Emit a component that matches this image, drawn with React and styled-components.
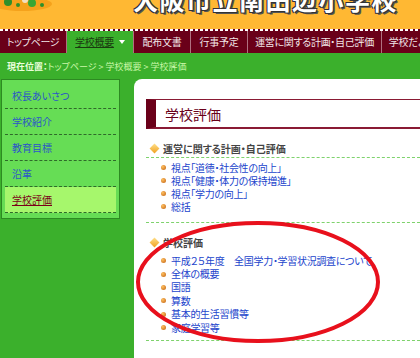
import styled, { createGlobalStyle } from "styled-components";

const Global = createGlobalStyle`
  body {
    margin: 0;
    background: #3bb02c;
    font-family: "Noto Sans CJK JP", "Noto Sans", sans-serif;
    font-feature-settings: "palt";
  }
`;

const Page = styled.div`
  position: relative;
  width: 420px;
  height: 358px;
  overflow: hidden;
  background: #3bb02c;
`;

const Header = styled.div`
  height: 30px;
  background: #ffb833;
  overflow: hidden;
  display: flex;
  align-items: flex-start;
`;

const Logo = styled.svg`
  flex: none;
  width: 133px;
  height: 30px;
`;

const Title = styled.div`
  margin-top: -14px;
  font-size: 25px;
  line-height: 26px;
  font-weight: bold;
  letter-spacing: 1.5px;
  color: #fff;
  white-space: nowrap;
  font-feature-settings: normal;
  text-shadow: 1px 1px 0 #333, -1px -1px 0 #333, 1px -1px 0 #333, -1px 1px 0 #333,
    2px 2px 0 #555;
`;

const Nav = styled.div`
  height: 23px;
  display: flex;
  background: #6a0019;
  position: relative;
  &::before {
    content: "";
    position: absolute;
    left: 0;
    right: 0;
    top: -1px;
    height: 2px;
    background: repeating-linear-gradient(90deg, #fff 0 3px, #6a0019 3px 5px);
  }
`;

const NavItem = styled.div`
  flex: none;
  width: ${(p) => p.w}px;
  box-sizing: border-box;
  border-right: 1px solid #b07080;
  display: flex;
  align-items: center;
  justify-content: center;
  gap: 5px;
  font-size: 10px;
  line-height: 12px;
  letter-spacing: -0.3px;
  color: ${(p) => (p.active ? "#1a3a10" : "#f2e6e8")};
  background: ${(p) => (p.active ? "#3bb02c" : "transparent")};
  white-space: nowrap;
  span {
    text-decoration: ${(p) => (p.active ? "underline" : "none")};
  }
`;

const Caret = styled.i`
  width: 0;
  height: 0;
  border-left: 3px solid transparent;
  border-right: 3px solid transparent;
  border-top: 4px solid #fff;
`;

const Crumb = styled.div`
  height: 26px;
  display: flex;
  align-items: center;
  padding-left: 7px;
  font-size: 9px;
  color: #c9f7a8;
  white-space: pre;
  b {
    color: #eaffdc;
    font-weight: bold;
  }
`;

const Body = styled.div`
  display: flex;
  align-items: flex-start;
  gap: 14px;
  padding-left: 1px;
`;

const Side = styled.div`
  flex: none;
  width: 119px;
  box-sizing: border-box;
  background: #66dd55;
  border: 1px solid #2d8a22;
  padding: 3px 3px 5px 3px;
`;

const SideItem = styled.div`
  height: 25px;
  border-bottom: 1px dashed #2f6a2a;
  display: flex;
  align-items: center;
  padding-left: 7px;
  font-size: 10px;
  color: ${(p) => (p.active ? "#7a0018" : "#2b55c8")};
  text-decoration: ${(p) => (p.active ? "underline" : "none")};
  background: ${(p) => (p.active ? "#a6f76c" : "transparent")};
`;

const Main = styled.div`
  flex: 1;
  height: 275px;
  background: #fff;
  border-radius: 8px 0 0 0;
  padding: 20px 0 0 12px;
  box-shadow: 0 3px 0 #b9d6b2;
`;

const Heading = styled.div`
  height: 30px;
  margin-right: -20px;
  box-sizing: border-box;
  border: 1px solid #8a1a34;
  border-left: 10px solid #6a0019;
  border-bottom: 2px solid #8a1a34;
  display: flex;
  align-items: center;
  padding-left: 9px;
  font-size: 14px;
  color: #6a0019;
`;

const Section = styled.div`
  margin-top: 10px;
`;

const SecTitle = styled.div`
  height: 18px;
  display: flex;
  align-items: center;
  gap: 5px;
  padding-left: 5px;
  font-size: 10px;
  font-weight: bold;
  color: #444;
  border-bottom: ${(p) => (p.line ? "1px dashed #7ed26c" : "none")};
`;

const Diamond = styled.i`
  width: 7px;
  height: 7px;
  transform: rotate(45deg);
  background: linear-gradient(135deg, #ffe08a, #f0a020);
`;

const List = styled.ul`
  list-style: none;
  margin: 0;
  padding: 3px 0 ${(p) => p.pb}px 15px;
  border-bottom: 1px dashed #7ed26c;
`;

const Item = styled.li`
  height: ${(p) => p.h}px;
  display: flex;
  align-items: center;
  gap: 5px;
  font-size: 10px;
  line-height: 12px;
  letter-spacing: -0.3px;
  color: #2244cc;
  white-space: nowrap;
`;

const Ball = styled.i`
  width: 5px;
  height: 5px;
  border-radius: 50%;
  background: radial-gradient(circle at 35% 35%, #ffc060, #c06010);
`;

const Circle = styled.svg`
  position: absolute;
  left: 0;
  top: 0;
  pointer-events: none;
`;

const nav = [
  ["トップページ", 67],
  ["学校概要", 67, true],
  ["配布文書", 57],
  ["行事予定", 57],
  ["運営に関する計画・自己評価", 134],
  ["学校だより", 60],
];

const side = ["校長あいさつ", "学校紹介", "教育目標", "沿革", "学校評価"];

const plan = [
  "視点「道徳・社会性の向上」",
  "視点「健康・体力の保持増進」",
  "視点「学力の向上」",
  "総括",
];

const evals = [
  "平成２５年度　全国学力・学習状況調査について",
  "全体の概要",
  "国語",
  "算数",
  "基本的生活習慣等",
  "家庭学習等",
];

export default function App() {
  return (
    <Page>
      <Global />
      <Header>
        <Logo viewBox="0 0 133 30">
          <ellipse cx="22" cy="4" rx="30" ry="7" fill="#f5a21c" />
          <circle cx="8" cy="2" r="4" fill="#2e8f2a" />
          <circle cx="18" cy="5" r="2" fill="#2e8f2a" />
          <circle cx="32" cy="3" r="4" fill="#3aa634" />
          <circle cx="42" cy="5" r="2" fill="#2e8f2a" />
          <circle cx="25" cy="0" r="3" fill="#f3e0c0" />
        </Logo>
        <Title>大阪市立南田辺小学校</Title>
      </Header>
      <Nav>
        {nav.map(([t, w, a]) => (
          <NavItem key={t} w={w} active={a}>
            <span>{t}</span>
            {a && <Caret />}
          </NavItem>
        ))}
      </Nav>
      <Crumb>
        <b>現在位置：</b>トップページ {">"} 学校概要 {">"} 学校評価
      </Crumb>
      <Body>
        <Side>
          {side.map((s, i) => (
            <SideItem key={s} active={i === 4}>
              {s}
            </SideItem>
          ))}
        </Side>
        <Main>
          <Heading>学校評価</Heading>
          <Section>
            <SecTitle line>
              <Diamond />
              運営に関する計画・自己評価
            </SecTitle>
            <List pb={9}>
              {plan.map((p) => (
                <Item key={p} h={13}>
                  <Ball />
                  {p}
                </Item>
              ))}
            </List>
          </Section>
          <Section>
            <SecTitle>
              <Diamond />
              学校評価
            </SecTitle>
            <List pb={6}>
              {evals.map((p) => (
                <Item key={p} h={13.4}>
                  <Ball />
                  {p}
                </Item>
              ))}
            </List>
          </Section>
        </Main>
      </Body>
      <Circle width="420" height="358">
        <ellipse
          cx="258"
          cy="282"
          rx="120"
          ry="59"
          fill="none"
          stroke="#e8101c"
          strokeWidth="4"
        />
      </Circle>
    </Page>
  );
}
